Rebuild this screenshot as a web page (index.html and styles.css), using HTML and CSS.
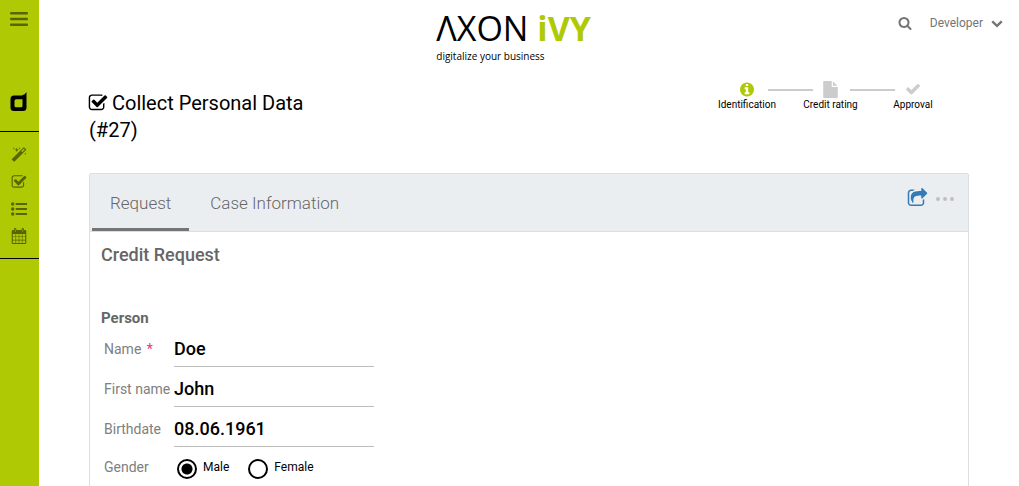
FILE: index.html
```
<!DOCTYPE html>
<html lang="en">
<head>
<meta charset="utf-8">
<meta name="viewport" content="width=device-width, initial-scale=1">
<title>Collect Personal Data</title>
<link rel="stylesheet" href="styles.css">
</head>
<body>
<svg class="sprite" aria-hidden="true">
  <symbol id="check-square" viewBox="0 0 1792 1792"><path d="M1472 930v318q0 119-84.500 203.500t-203.500 84.500h-832q-119 0-203.500-84.500t-84.500-203.500v-832q0-119 84.500-203.500t203.500-84.500h832q63 0 117 25 15 7 18 23 3 17-9 29l-49 49q-10 10-23 10-3 0-9-2-23-6-45-6h-832q-66 0-113 47t-47 113v832q0 66 47 113t113 47h832q66 0 113-47t47-113v-254q0-13 9-22l64-64q10-10 23-10 6 0 12 3 20 8 20 29zm231-489l-814 814q-24 24-57 24t-57-24l-430-430q-24-24-24-57t24-57l110-110q24-24 57-24t57 24l263 263 647-647q24-24 57-24t57 24l110 110q24 24 24 57t-24 57z"/></symbol>
</svg>
<div class="page">
  <nav class="sidebar" aria-label="Main">
    <button class="side-button menu-toggle" type="button" aria-label="Menu">
      <svg class="icon-menu" viewBox="0 0 18 14"><path d="M1 0h16q1 0 1 1v.500q0 1-1 1H1q-1 0-1-1V1q0-1 1-1zM1 5.800h16q1 0 1 1v.500q0 1-1 1H1q-1 0-1-1v-.500q0-1 1-1zM1 11.500h16q1 0 1 1v.500q0 1-1 1H1q-1 0-1-1v-.500q0-1 1-1z"/></svg>
    </button>
    <a class="brand" href="#" aria-label="Dashboard">
      <svg class="icon-brand" viewBox="0 0 17 20"><path fill-rule="evenodd" d="M16.500 0v15.500q0 3.500-3.500 3.500H4Q.500 19 .500 15.500V7Q.500 3.500 4 3.500h8Q15 3 16.500 0zM6 7.200Q4.500 7.200 4.500 8.700v5q0 1.500 1.500 1.500h5q1.500 0 1.500-1.500V7.200z"/></svg>
    </a>
    <div class="side-links">
      <a class="side-button" href="#" aria-label="Processes"><svg class="icon-side" viewBox="0 0 1792 1792"><path d="M1254 581l293-293-107-107-293 293zm447-293q0 27-18 45l-1286 1286q-18 18-45 18t-45-18l-198-198q-18-18-18-45t18-45l1286-1286q18-18 45-18t45 18l198 198q18 18 18 45zm-1351-190l98 30-98 30-30 98-30-98-98-30 98-30 30-98zm350 162l196 60-196 60-60 196-60-196-196-60 196-60 60-196zm930 478l98 30-98 30-30 98-30-98-98-30 98-30 30-98zm-640-640l98 30-98 30-30 98-30-98-98-30 98-30 30-98z"/></svg></a>
      <a class="side-button" href="#" aria-label="Tasks"><svg class="icon-side"><use href="#check-square"/></svg></a>
      <a class="side-button" href="#" aria-label="Cases"><svg class="icon-side" viewBox="0 0 16 16"><circle cx="1.700" cy="3" r="1.700"/><circle cx="1.700" cy="8" r="1.700"/><circle cx="1.700" cy="13" r="1.700"/><path d="M4.700 2H16v2H4.700zM4.700 7H16v2H4.700zM4.700 12H16v2H4.700z"/></svg></a>
      <a class="side-button" href="#" aria-label="Calendar"><svg class="icon-side" viewBox="0 0 16 16"><path fill-rule="evenodd" d="M2 2h1V1.200Q3 0 4.200 0T5.400 1.200V2h5.200v-.800Q10.600 0 11.800 0T13 1.200V2h1q1.300 0 1.300 1.300v11.400Q15.300 16 14 16H2Q.700 16 .700 14.700V3.300Q.700 2 2 2zM1.800 6v2.500h2.700V6zm3.300 0v2.500h2.600V6zm3.200 0v2.500h2.600V6zm3.200 0v2.500h2.700V6zM1.800 9.100v2.700h2.700V9.100zm3.300 0v2.700h2.600V9.100zm3.200 0v2.700h2.600V9.100zm3.200 0v2.700h2.700V9.100zM1.800 12.400V15h2.700v-2.600zm3.300 0V15h2.600v-2.600zm3.200 0V15h2.600v-2.600zm3.200 0V15h2.700v-2.600zM3.900 1.200v2.500h.600V1.200zm7.600 0v2.500h.600V1.200z"/></svg></a>
    </div>
  </nav>
  <div class="content">
    <header class="topbar">
      <div class="logo">
        <div class="logo-name">ΛXON <b class="logo-accent">iVY</b></div>
        <div class="logo-claim">digitalize your business</div>
      </div>
      <div class="user-tools">
        <button class="plain-button" type="button" aria-label="Search"><svg class="icon-search" viewBox="0 0 1792 1792"><path d="M1216 832q0-185-131.500-316.500t-316.500-131.500-316.500 131.500-131.500 316.500 131.500 316.500 316.500 131.500 316.500-131.500 131.500-316.500zm512 832q0 52-38 90t-90 38q-54 0-90-38l-343-342q-179 124-399 124-143 0-273.500-55.500t-225-150-150-225-55.500-273.500 55.500-273.500 150-225 225-150 273.500-55.500 273.500 55.500 225 150 150 225 55.500 273.500q0 220-124 399l343 343q37 37 37 90z"/></svg></button>
        <button class="plain-button user-menu" type="button">Developer <svg class="icon-chevron" viewBox="0 0 1792 1792"><path d="M1683 808l-742 741q-19 19-45 19t-45-19l-742-741q-19-19-19-45.500t19-45.500l166-165q19-19 45-19t45 19l531 531 531-531q19-19 45-19t45 19l166 165q19 19 19 45.500t-19 45.500z"/></svg></button>
      </div>
    </header>
    <main class="main">
      <div class="task-head">
        <h1 class="task-title"><svg class="icon-title"><use href="#check-square"/></svg> Collect Personal Data (#27)</h1>
        <ol class="steps">
          <li class="step step-active"><svg class="icon-step" viewBox="128 128 1536 1536"><path d="M1152 1376v-160q0-14-9-23t-23-9h-96v-512q0-14-9-23t-23-9h-320q-14 0-23 9t-9 23v160q0 14 9 23t23 9h96v320h-96q-14 0-23 9t-9 23v160q0 14 9 23t23 9h448q14 0 23-9t9-23zm-128-896v-160q0-14-9-23t-23-9h-192q-14 0-23 9t-9 23v160q0 14 9 23t23 9h192q14 0 23-9t9-23zm640 416q0 209-103 385.500t-279.500 279.500-385.500 103-385.500-103-279.500-279.500-103-385.500 103-385.500 279.500-279.500 385.500-103 385.500 103 279.500 279.500 103 385.500z"/></svg><span class="step-label">Identification</span></li>
          <li class="step"><svg class="icon-step icon-file" viewBox="128 0 1536 1792"><path d="M1152 512v-472q22 14 36 28l408 408q14 14 28 36h-472zm-128 32q0 40 28 68t68 28h544v1056q0 40-28 68t-68 28h-1344q-40 0-68-28t-28-68v-1600q0-40 28-68t68-28h800v544z"/></svg><span class="step-label">Credit rating</span></li>
          <li class="step"><svg class="icon-step" viewBox="121 180 1550 1550"><path d="M1671 566q0 40-28 68l-724 724-136 136q-28 28-68 28t-68-28l-136-136-362-362q-28-28-28-68t28-68l136-136q28-28 68-28t68 28l294 295 656-657q28-28 68-28t68 28l136 136q28 28 28 68z"/></svg><span class="step-label">Approval</span></li>
        </ol>
      </div>
      <section class="panel">
        <div class="panel-head">
          <div class="tabs" role="tablist">
            <button class="tab tab-active" type="button" role="tab" aria-selected="true">Request</button>
            <button class="tab" type="button" role="tab" aria-selected="false">Case Information</button>
          </div>
          <div class="panel-actions">
            <button class="plain-button" type="button" aria-label="Share"><svg class="icon-share" viewBox="0 0 1792 1792"><path d="M1472 989v259q0 119-84.500 203.500t-203.500 84.500h-832q-119 0-203.500-84.500t-84.500-203.500v-832q0-119 84.500-203.500t203.500-84.500h255q13 0 22.500 9.500t9.500 22.500q0 27-26 32-77 26-133 60-10 4-16 4h-112q-66 0-113 47t-47 113v832q0 66 47 113t113 47h832q66 0 113-47t47-113v-214q0-19 18-29 28-13 54-37 16-16 35-8 21 9 21 29zm237-496l-384 384q-18 19-45 19-12 0-25-5-39-17-39-59v-192h-160q-323 0-438 131-119 137-74 473 3 23-20 34-8 2-12 2-16 0-26-13-10-14-21-31t-39.500-68.500-49.500-99.500-38.500-114-17.500-122q0-49 3.500-91t14-90 28-88 47-81.500 68.500-74 94.500-61.500 124.500-48.500 159.500-30.500 196.500-11h160v-192q0-42 39-59 13-5 25-5 26 0 45 19l384 384q19 19 19 45t-19 45z"/></svg></button>
            <button class="plain-button" type="button" aria-label="More"><svg class="icon-more" viewBox="0 0 18 4"><circle cx="2" cy="2" r="1.900"/><circle cx="9" cy="2" r="1.900"/><circle cx="16" cy="2" r="1.900"/></svg></button>
          </div>
        </div>
        <form class="form">
          <h2 class="form-title">Credit Request</h2>
          <h3 class="form-group">Person</h3>
          <div class="field">
            <label class="field-label" for="name">Name <span class="required">*</span></label>
            <input class="field-input" id="name" type="text" value="Doe">
          </div>
          <div class="field">
            <label class="field-label" for="first-name">First name</label>
            <input class="field-input" id="first-name" type="text" value="John">
          </div>
          <div class="field">
            <label class="field-label" for="birthdate">Birthdate</label>
            <input class="field-input" id="birthdate" type="text" value="08.06.1961">
          </div>
          <div class="field" role="radiogroup" aria-labelledby="gender">
            <span class="field-label" id="gender">Gender</span>
            <div class="options">
              <label class="option"><input class="radio" type="radio" name="gender" checked> <span class="option-label">Male</span></label>
              <label class="option"><input class="radio" type="radio" name="gender"> <span class="option-label">Female</span></label>
            </div>
          </div>
        </form>
      </section>
    </main>
  </div>
</div>
</body>
</html>
```

FILE: styles.css
```
* {
  box-sizing: border-box;
}

body {
  margin: 0;
  font-family: Roboto, "Liberation Sans", sans-serif;
  color: #000;
  background: #fff;
  overflow: hidden;
}

svg {
  display: block;
  fill: currentColor;
}

.sprite {
  position: absolute;
  width: 0;
  height: 0;
}

.page {
  display: flex;
  height: 100vh;
}

.sidebar {
  flex: none;
  width: 39px;
  background: #afca05;
  color: #576503;
}

.side-button {
  display: flex;
  align-items: center;
  justify-content: center;
  width: 100%;
  height: 27px;
  padding: 0 1px 0 0;
  border: 0;
  background: none;
  color: inherit;
}

.menu-toggle {
  height: 38px;
}

.icon-menu {
  width: 18px;
  height: 14px;
}

.brand {
  display: flex;
  justify-content: center;
  padding: 54px 2px 19px 0;
  color: #000;
}

.icon-brand {
  width: 17px;
  height: 20px;
}

.side-links {
  padding: 9px 0;
  border-top: 1px solid #000;
  border-bottom: 1px solid #000;
}

.icon-side {
  width: 16px;
  height: 16px;
}

.content {
  flex: 1;
  min-width: 0;
}

.topbar {
  display: grid;
  grid-template-columns: 27fr auto 28fr;
  align-items: start;
  padding: 6px 16px 0 0;
}

.logo {
  grid-column: 2;
}

.logo-name {
  font: 400 34px/44px "Open Sans", "Noto Sans", sans-serif;
}

.logo-accent {
  font-weight: 700;
  color: #afca05;
}

.logo-claim {
  font: 10px/12px "Open Sans", "Noto Sans", sans-serif;
}

.user-tools {
  display: flex;
  justify-content: flex-end;
  align-items: center;
  gap: 18px;
  padding-top: 6px;
}

.plain-button {
  display: flex;
  align-items: center;
  padding: 0;
  border: 0;
  background: none;
  color: #757575;
  font: 12px/22px Roboto, sans-serif;
}

.user-menu {
  gap: 8px;
}

.icon-search {
  width: 14px;
  height: 14px;
}

.icon-chevron {
  width: 12px;
  height: 12px;
}

.main {
  padding: 19px 50px 0;
}

.task-head {
  display: flex;
  justify-content: space-between;
  align-items: flex-start;
  padding-right: 36px;
  margin-bottom: 29px;
}

.task-title {
  width: 28%;
  margin: 0;
  padding-top: 9px;
  font-size: 20px;
  line-height: 27px;
  font-weight: 400;
}

.icon-title {
  display: inline-block;
  width: 20px;
  height: 20px;
  margin: 0 -1px;
  vertical-align: -3px;
}

.steps {
  display: flex;
  margin: 0;
  padding: 0;
  list-style: none;
}

.step {
  position: relative;
  display: flex;
  flex-direction: column;
  align-items: center;
  width: 83px;
  color: #ccc;
}

.step:last-child {
  width: 40px;
}

.step + .step::before {
  content: "";
  position: absolute;
  top: 8px;
  right: calc(50% + 18px);
  width: 45px;
  height: 2px;
  background: #ccc;
}

.step-active {
  width: 60px;
  margin-right: 12px;
  color: #afca05;
}

.step:nth-child(2) {
  margin-right: 21px;
}

.icon-step {
  width: 14px;
  height: 17px;
}

.icon-file {
  width: 15px;
}

.step-label {
  font-size: 10px;
  line-height: 14px;
  color: #000;
}

.panel {
  border: 1px solid #dcdfe2;
  border-radius: 2px;
}

.panel-head {
  display: flex;
  justify-content: space-between;
  align-items: stretch;
  background: #ebeef1;
  border-bottom: 1px solid #dcdfe2;
}

.tabs {
  display: flex;
  gap: 3px;
  padding-left: 2px;
}

.tab {
  height: 57px;
  padding: 3px 18px 0;
  border: 0;
  border-bottom: 3px solid transparent;
  background: none;
  color: #666;
  font: 300 17px/20px Roboto, sans-serif;
}

.tab-active {
  border-color: #757575;
}

.panel-actions {
  display: flex;
  align-items: center;
  gap: 8px;
  padding: 0 14px 8px 0;
}

.icon-share {
  width: 21px;
  height: 21px;
  color: #337ab7;
}

.icon-more {
  width: 18px;
  height: 4px;
  color: #bdbdbd;
}

.form {
  padding: 10px 11px;
}

.form-title {
  margin: 0 0 40px;
  color: #666;
  font-size: 18px;
  line-height: 26px;
  font-weight: 500;
}

.form-group {
  margin: 0 0 3px;
  color: #666;
  font-size: 15px;
  line-height: 20px;
  font-weight: 700;
}

.field {
  display: flex;
  align-items: flex-start;
  margin-bottom: 4px;
  padding-left: 3px;
}

.field:last-child {
  margin-top: -2px;
}

.field-label {
  width: 70px;
  flex: none;
  color: #808080;
  font-size: 14px;
  line-height: 36px;
  white-space: nowrap;
}

.required {
  margin-left: 2px;
  color: #f0326e;
}

.field-input {
  width: 200px;
  height: 36px;
  padding: 0 0 1px;
  border: 0;
  border-bottom: 1px solid #bdbdbd;
  background: none;
  color: #000;
  font: 500 18px/22px Roboto, sans-serif;
  outline: 0;
}

.options {
  display: flex;
  gap: 19px;
  padding-left: 3px;
}

.option {
  display: flex;
  align-items: center;
  gap: 6px;
  height: 36px;
}

.option-label {
  padding-bottom: 1px;
  font-size: 12px;
  line-height: 16px;
}

.radio {
  appearance: none;
  width: 20px;
  height: 20px;
  margin: 3px 0 0;
  border: 2px solid #000;
  border-radius: 50%;
}

.radio:checked {
  background: radial-gradient(circle, #000 5px, #fff 6px);
}
```
